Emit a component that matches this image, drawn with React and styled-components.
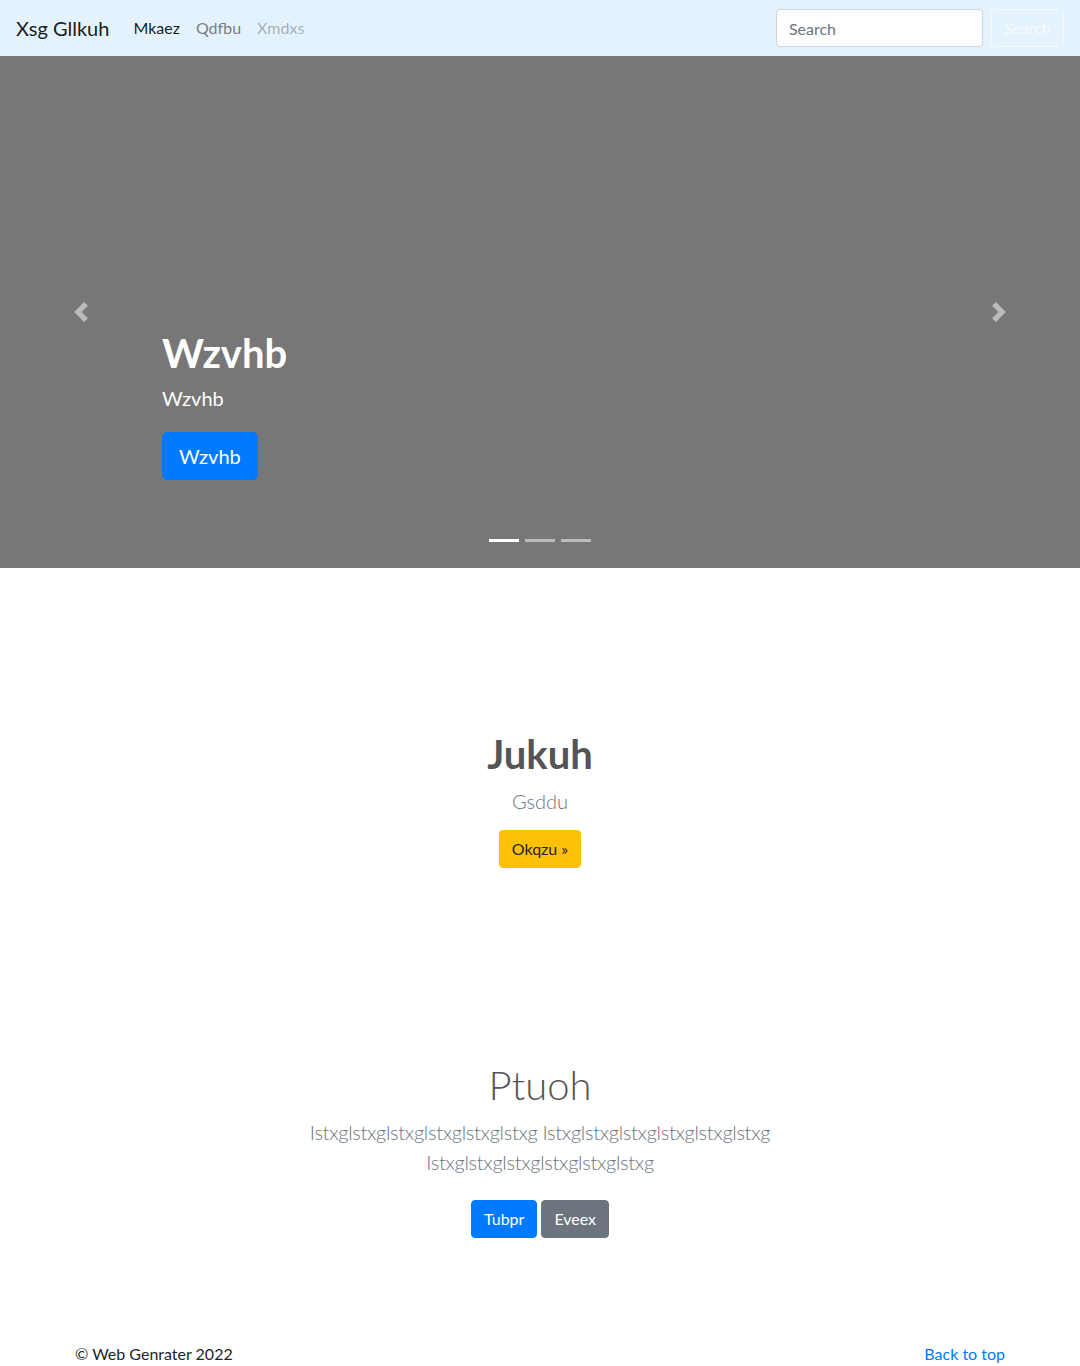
import React from 'react'
import styled, { createGlobalStyle } from 'styled-components'

const GlobalStyle = createGlobalStyle`
  * { box-sizing: border-box; }
  body {
    margin: 0;
    font-family: 'Lato', 'Open Sans', sans-serif;
    font-size: 16px;
    line-height: 1.5;
    color: #212529;
    background: #fff;
  }
`

const Navbar = styled.nav`
  display: flex;
  align-items: center;
  height: 56px;
  padding: 8px 16px;
  background: #e3f2fd;
`

const Brand = styled.a`
  font-size: 20px;
  line-height: 30px;
  color: rgba(0, 0, 0, 0.9);
  margin-right: 16px;
  text-decoration: none;
`

const NavList = styled.ul`
  display: flex;
  list-style: none;
  margin: 0;
  padding: 0;
`

const linkColors = {
  active: 'rgba(0, 0, 0, 0.9)',
  normal: 'rgba(0, 0, 0, 0.5)',
  disabled: 'rgba(0, 0, 0, 0.3)',
}

const NavLink = styled.a`
  display: block;
  padding: 8px;
  color: ${p => linkColors[p.$state || 'normal']};
  text-decoration: none;
`

const SearchForm = styled.form`
  display: flex;
  align-items: center;
  gap: 8px;
  margin-left: auto;
`

const SearchInput = styled.input`
  width: 207px;
  height: 38px;
  padding: 6px 12px;
  font: inherit;
  color: #495057;
  background: #fff;
  border: 1px solid #ced4da;
  border-radius: 4px;
  &::placeholder { color: #6c757d; }
`

const OutlineLight = styled.button`
  height: 38px;
  padding: 6px 12px;
  font: inherit;
  color: #f8f9fa;
  background: transparent;
  border: 1px solid #f8f9fa;
  border-radius: 4px;
`

const Carousel = styled.div`
  position: relative;
  height: 512px;
  background: #777;
  display: flex;
  flex-direction: column;
  justify-content: flex-end;
  padding: 0 15% 68px;
`

const Caption = styled.div`
  padding: 20px 0;
  color: #fff;
  text-align: left;
`

const CaptionTitle = styled.h1`
  font-size: 40px;
  font-weight: 700;
  line-height: 1.2;
  margin: 0 0 6px;
`

const CaptionText = styled.p`
  font-size: 20px;
  line-height: 30px;
  margin: 0 0 19px;
`

const Button = styled.a`
  display: inline-block;
  font-size: ${p => (p.$lg ? '20px' : '16px')};
  line-height: 1.5;
  padding: ${p => (p.$lg ? '8px 16px' : '6px 12px')};
  border-radius: ${p => (p.$lg ? '5px' : '4px')};
  color: ${p => p.$fg || '#fff'};
  background: ${p => p.$bg};
  border: 1px solid ${p => p.$bg};
  text-decoration: none;
`

const Control = styled.span`
  position: absolute;
  top: 0;
  bottom: 0;
  width: 15%;
  ${p => (p.$side === 'left' ? 'left: 0;' : 'right: 0;')}
  display: flex;
  align-items: center;
  justify-content: center;
  opacity: 0.5;
`

const Indicators = styled.ol`
  position: absolute;
  left: 0;
  right: 0;
  bottom: 26px;
  display: flex;
  justify-content: center;
  list-style: none;
  margin: 0;
  padding: 0;
`

const Indicator = styled.li`
  width: 30px;
  height: 3px;
  margin: 0 3px;
  background: #fff;
  opacity: ${p => (p.$active ? 1 : 0.5)};
`

const Section = styled.section`
  text-align: center;
  padding-top: ${p => p.$top}px;
`

const Heading = styled.h2`
  font-size: 40px;
  font-weight: ${p => p.$weight || 700};
  line-height: 1.2;
  color: #555;
  margin: 0 0 8px;
`

const Lead = styled.p`
  font-size: 20px;
  font-weight: 300;
  line-height: 30px;
  letter-spacing: ${p => (p.$tight ? '-0.3px' : '0')};
  color: #6c757d;
  margin: 0 auto 14px;
  max-width: 610px;
`

const ButtonRow = styled.div`
  display: flex;
  justify-content: center;
  gap: 4px;
  margin-top: ${p => p.$top || 0}px;
`

const Footer = styled.footer`
  width: 960px;
  margin: 0 auto;
  padding: 104px 15px 0;
  display: flex;
  justify-content: space-between;
  color: #212529;
`

const FooterLink = styled.a`
  color: #007bff;
  text-decoration: none;
`

const Chevron = ({ flip }) => (
  <svg width="20" height="20" viewBox="0 0 8 8" fill="#fff" style={flip ? { transform: 'scaleX(-1)' } : undefined}>
    <path d="M5.25 0l-4 4 4 4 1.5-1.5L4.25 4l2.5-2.5L5.25 0z" />
  </svg>
)

export default function App() {
  return (
    <>
      <GlobalStyle />
      <Navbar>
        <Brand href="#">Xsg Gllkuh</Brand>
        <NavList>
          <li><NavLink $state="active" href="#">Mkaez</NavLink></li>
          <li><NavLink href="#">Qdfbu</NavLink></li>
          <li><NavLink $state="disabled" href="#">Xmdxs</NavLink></li>
        </NavList>
        <SearchForm onSubmit={e => e.preventDefault()}>
          <SearchInput type="search" placeholder="Search" />
          <OutlineLight type="submit">Search</OutlineLight>
        </SearchForm>
      </Navbar>

      <Carousel>
        <Indicators>
          <Indicator $active />
          <Indicator />
          <Indicator />
        </Indicators>
        <Caption>
          <CaptionTitle>Wzvhb</CaptionTitle>
          <CaptionText>Wzvhb</CaptionText>
          <Button $lg $bg="#007bff" href="#">Wzvhb</Button>
        </Caption>
        <Control $side="left"><Chevron /></Control>
        <Control $side="right"><Chevron flip /></Control>
      </Carousel>

      <Section $top={162}>
        <Heading>Jukuh</Heading>
        <Lead>Gsddu</Lead>
        <Button $bg="#ffc107" $fg="#212529" href="#">Okqzu »</Button>
      </Section>

      <Section $top={193}>
        <Heading $weight={300}>Ptuoh</Heading>
        <Lead $tight>Istxglstxglstxglstxglstxglstxg Istxglstxglstxglstxglstxglstxg Istxglstxglstxglstxglstxglstxg</Lead>
        <ButtonRow $top={23}>
          <Button $bg="#007bff" href="#">Tubpr</Button>
          <Button $bg="#6c757d" href="#">Eveex</Button>
        </ButtonRow>
      </Section>

      <Footer>
        <span>© Web Genrater 2022</span>
        <FooterLink href="#">Back to top</FooterLink>
      </Footer>
    </>
  )
}
